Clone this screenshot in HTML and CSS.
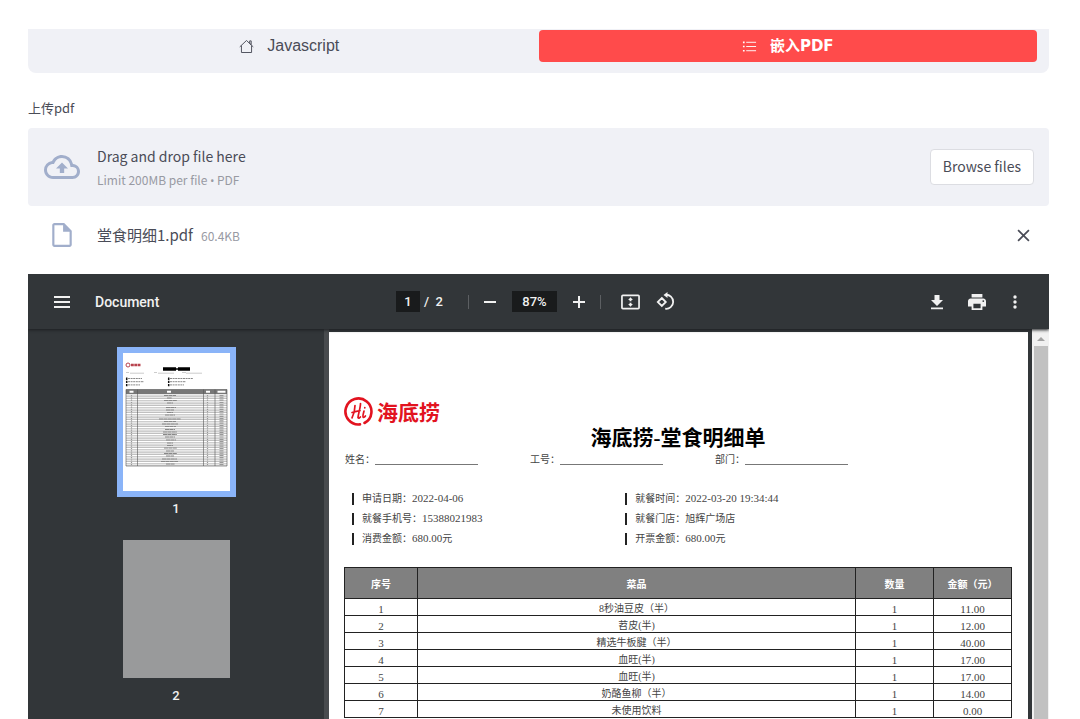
FILE: index.html
```html
<!DOCTYPE html>
<html lang="zh-CN">
<head>
<meta charset="utf-8">
<meta name="viewport" content="width=device-width, initial-scale=1">
<title>嵌入PDF</title>
<link rel="stylesheet" href="styles.css">
</head>
<body>
<main class="app">
  <nav class="tabs">
    <a class="tab" href="#javascript">
      <svg class="tab-icon" viewBox="0 0 16 16" fill="none" stroke="currentColor"><path d="M.8 8.4 8 1.6l7.2 6.8M2.6 7v7.4h10.8V7M11.4 2v2.6l1.6 1.5V2z"/></svg>
      <span>Javascript</span>
    </a>
    <a class="tab tab-active" href="#pdf">
      <svg class="tab-icon" viewBox="0 0 16 16" fill="none" stroke="currentColor"><path d="M4.5 3.5H15M4.5 8H15M4.5 12.500H15"/><path stroke-width="1.800" d="M1 3.500h1.800M1 8h1.800M1 12.500h1.800"/></svg>
      <span>嵌入PDF</span>
    </a>
  </nav>

  <section class="uploader">
    <h2 class="uploader-label">上传pdf</h2>
    <div class="dropzone">
      <svg class="cloud" viewBox="0 0 24 24" fill="currentColor"><path d="M19.35 10.04A7.49 7.49 0 0 0 12 4C9.110 4 6.600 5.640 5.350 8.040A5.994 5.994 0 0 0 0 14c0 3.310 2.690 6 6 6h13c2.760 0 5-2.240 5-5 0-2.640-2.050-4.780-4.650-4.960zM19 18H6c-2.210 0-4-1.790-4-4 0-2.050 1.530-3.760 3.560-3.970l1.070-.11.5-.95A5.469 5.469 0 0 1 12 6c2.620 0 4.880 1.860 5.390 4.430l.3 1.500 1.530.11A2.980 2.980 0 0 1 22 15c0 1.650-1.350 3-3 3zM8 13h2.550v3h2.900v-3H16l-4-4z"/></svg>
      <div class="dropzone-text">
        <span class="dropzone-title">Drag and drop file here</span>
        <span class="dropzone-hint">Limit 200MB per file <span class="bullet">•</span> PDF</span>
      </div>
      <button class="browse" type="button">Browse files</button>
    </div>
    <div class="file">
      <svg class="file-icon" viewBox="0 0 24 24" fill="currentColor"><path fill-rule="evenodd" d="M5 1c-1.100 0-2 .9-2 2v18c0 1.100.9 2 2 2h14c1.100 0 2-.9 2-2V8l-7-7zM5 3h8v6h6v12H5z"/></svg>
      <span class="file-name">堂食明细1.pdf</span>
      <span class="file-size">60.4KB</span>
      <button class="remove" type="button" aria-label="Remove file"><svg viewBox="0 0 12 12" fill="none" stroke="currentColor" stroke-width="1.600"><path d="m1 1 10 10M11 1 1 11"/></svg></button>
    </div>
  </section>

  <section class="viewer">
    <header class="toolbar">
      <div class="tools-left">
        <button class="tool" type="button" aria-label="Menu"><svg class="menu-icon" viewBox="0 0 16 14" fill="currentColor"><path d="M0 1h16v2H0zM0 6h16v2H0zM0 11h16v2H0z"/></svg></button>
        <span class="document-name">Document</span>
      </div>
      <div class="tools-center">
        <input class="page-input" type="text" value="1" aria-label="Page number">
        <span class="page-total">/&nbsp; 2</span>
        <span class="divider divider-first"></span>
        <button class="tool" type="button" aria-label="Zoom out"><svg class="step-icon" viewBox="0 0 12 12" fill="currentColor"><path d="M0 5h12v2H0z"/></svg></button>
        <input class="zoom-input" type="text" value="87%" aria-label="Zoom level">
        <button class="tool" type="button" aria-label="Zoom in"><svg class="step-icon" viewBox="0 0 12 12" fill="currentColor"><path d="M0 5h12v2H0zM5 0h2v12H5z"/></svg></button>
        <span class="divider divider-last"></span>
        <button class="tool" type="button" aria-label="Fit to page"><svg class="fit-icon" viewBox="0 0 20 16" fill="currentColor"><rect x="1" y="1" width="18" height="14" rx="1" fill="none" stroke="currentColor" stroke-width="1.800"/><path d="m10 3 2.500 3H11v1.200H9V6H7.500zM10 13l-2.500-3H9V8.800h2V10h1.500z"/></svg></button>
        <button class="tool" type="button" aria-label="Rotate"><svg class="rotate-icon" viewBox="0 0 19 19" fill="none" stroke="currentColor" stroke-width="1.800"><path d="m5.800 6 4 4-4 4-4-4zM9.500 2.800A7 7 0 1 1 9.200 16.700"/><path fill="currentColor" stroke="none" d="M11.500 0v6L7.500 3z"/></svg></button>
      </div>
      <div class="tools-right">
        <button class="tool" type="button" aria-label="Download"><svg class="download-icon" viewBox="0 0 14 16" fill="currentColor"><path d="M4.500 1h5v5H13l-6 6-6-6h3.500zM1 13.500h12v1.800H1z"/></svg></button>
        <button class="tool" type="button" aria-label="Print"><svg class="print-icon" viewBox="2 2 20 20" fill="currentColor"><path fill-rule="evenodd" d="M19 8H5c-1.660 0-3 1.340-3 3v6h4v4h12v-4h4v-6c0-1.660-1.340-3-3-3zm-3 11H8v-5h8zm3-7a1 1 0 1 1 0-2 1 1 0 0 1 0 2zM18 3H6v4h12z"/></svg></button>
        <button class="tool" type="button" aria-label="More"><svg class="more-icon" viewBox="0 0 4 14" fill="currentColor"><circle cx="2" cy="2" r="1.700"/><circle cx="2" cy="7" r="1.700"/><circle cx="2" cy="12" r="1.700"/></svg></button>
      </div>
    </header>

    <div class="viewer-body">
      <aside class="thumbs">
        <div class="thumb thumb-active">
          <svg class="thumb-page" viewBox="0 0 107 138">
            <defs><pattern id="rows" width="101" height="7" patternUnits="userSpaceOnUse" y="41"><path fill="#e8e8e8" d="M0 0h101v7H0z"/><path fill="#fff" d="M0 5h101v1H0z"/><path stroke="#999" stroke-width=".5" d="M0 2.200h101M0 4.500h101M0 6.800h101"/></pattern></defs>
            <path fill="#fff" d="M0 0h107v138H0z"/>
            <circle cx="5" cy="12" r="2" fill="none" stroke="#b8434e"/>
            <path stroke="#b8434e" stroke-width="2.500" stroke-dasharray="2.800 .5" d="M8 12h10"/>
            <path stroke="#000" stroke-width="3.500" d="M40 16h13M55 16h12"/>
            <path stroke="#000" stroke-width="1.500" d="M52 16h4"/>
            <path stroke="#aaa" stroke-width=".6" d="M3 19.500h3M7 20.200h14M31 19.500h3M35 20.200h16M59 19.500h4M63 20.200h16"/>
            <path stroke="#111" stroke-width="1.500" stroke-dasharray="2.400 .8" d="M3.700 24.500v9M45.700 24.500v9"/>
            <path stroke="#888" stroke-dasharray="2 .6" d="M5 25.500h14M5 28.700h16M5 31.900h12M47 25.500h23M47 28.700h16M47 31.900h14"/>
            <path fill="url(#rows)" d="M3 41h101v72H3z"/>
            <path stroke="#999" stroke-width="1.200" stroke-dasharray="1.200 1.100" d="M8.500 42v70M84.500 42v70"/>
            <path stroke="#888" stroke-dasharray="4 .4" d="M41 42.500h12M44 45h5M41 47.500h13M44 50h6M43 54.500h10M43 57h8M44 59.500h6M42 62h10M36 66h22M41 68.500h12M39 71h16M42 73.500h11M42 76.500h10M40 79h14M40 81.500h14M42 84h10M43 87h10M44 90h6M44 92.500h6M41 95h13M43 98h8M41 100.500h13M43 103h8M39 106h15M38 108.500h17M43 111h9"/>
            <path stroke="#999" stroke-width="4" stroke-dasharray="1.200 1.100" d="M98.500 42v70"/>
            <path fill="#777" d="M3 36.500h101v4.500H3z"/>
            <path fill="none" stroke="#555" stroke-width=".6" d="M3 36.500h101V113H3zM14.500 36.500V113M80.500 36.500V113M92 36.500V113"/>
            <path stroke="#fff" stroke-width="2" d="M6.500 38.700h4M44 38.700h4M83 38.700h4M94.500 38.700h8"/>
          </svg>
        </div>
        <span class="thumb-number">1</span>
        <div class="thumb"><div class="thumb-page thumb-blank"></div></div>
        <span class="thumb-number">2</span>
      </aside>

      <article class="page">
        <div class="brand">
          <svg class="brand-mark" viewBox="0 0 29 29" fill="none" stroke="currentColor" stroke-linecap="round"><path stroke-width="2.600" d="M16 27.400A13 13 0 1 1 20.500 26"/><path stroke-width="1.700" d="M11 8.500c0 4-1.300 9-3 12.300M16.500 6.500c0 4-2 9.500-2.500 14 .6 1.200 1.600.5 2.400-.5M8 15.500c2.500-.7 5-1.400 8-1.800M20 14c-.6 2.500-1.600 5.300-.8 6.300.7.500 1.600-.4 2.200-1.300M20.800 10.500v.3"/></svg>
          <span>海底捞</span>
        </div>
        <h1 class="title">海底捞-堂食明细单</h1>
        <div class="blanks">
          <div class="blank">姓名：<span class="blank-line"></span></div>
          <div class="blank">工号：<span class="blank-line"></span></div>
          <div class="blank">部门：<span class="blank-line"></span></div>
        </div>
        <div class="facts">
          <div class="fact">申请日期：<span class="number">2022-04-06</span></div>
          <div class="fact">就餐时间：<span class="number">2022-03-20 19:34:44</span></div>
          <div class="fact">就餐手机号：<span class="number">15388021983</span></div>
          <div class="fact">就餐门店：旭辉广场店</div>
          <div class="fact">消费金额：<span class="number">680.00</span>元</div>
          <div class="fact">开票金额：<span class="number">680.00</span>元</div>
        </div>
        <table class="dishes">
          <thead><tr><th class="col-index">序号</th><th>菜品</th><th class="col-number">数量</th><th class="col-number">金额（元）</th></tr></thead>
          <tbody>
            <tr><td class="number">1</td><td>8秒油豆皮（半）</td><td class="number">1</td><td class="number">11.00</td></tr>
            <tr><td class="number">2</td><td>苕皮(半)</td><td class="number">1</td><td class="number">12.00</td></tr>
            <tr><td class="number">3</td><td>精选牛板腱（半）</td><td class="number">1</td><td class="number">40.00</td></tr>
            <tr><td class="number">4</td><td>血旺(半)</td><td class="number">1</td><td class="number">17.00</td></tr>
            <tr><td class="number">5</td><td>血旺(半)</td><td class="number">1</td><td class="number">17.00</td></tr>
            <tr><td class="number">6</td><td>奶酪鱼柳（半）</td><td class="number">1</td><td class="number">14.00</td></tr>
            <tr><td class="number">7</td><td>未使用饮料</td><td class="number">1</td><td class="number">0.00</td></tr>
          </tbody>
        </table>
      </article>

      <div class="scrollbar"><svg class="scroll-arrow" viewBox="0 0 8 4" fill="#a3a3a3"><path d="M4 0l4 4H0z"/></svg><div class="scroll-thumb"></div></div>
    </div>
  </section>
</main>
</body>
</html>
```
FILE: styles.css
```css
* {
  box-sizing: border-box;
}

body {
  margin: 0;
  background: #fff;
  color: #4a4c57;
  font-family: "Noto Sans CJK SC", sans-serif;
  font-size: 16px;
}

svg {
  display: block;
}

button,
input {
  font: inherit;
  color: inherit;
}

.app {
  display: flex;
  flex-direction: column;
  height: 100vh;
  padding: 29px 31px 0 28px;
}

/* Tabs */
.tabs {
  display: flex;
  padding: 1px 12px 11px;
  background: #f0f1f6;
  border-radius: 0 0 8px 8px;
}

.tab {
  display: flex;
  flex: 1;
  align-items: center;
  justify-content: center;
  gap: 13px;
  height: 32px;
  border-radius: 4px;
  color: #4a4c57;
  font-family: "Liberation Sans", "Noto Sans CJK SC", sans-serif;
  line-height: 24px;
  text-decoration: none;
}

.tab-active {
  background: #ff4b4b;
  color: #fff;
  font-family: "DejaVu Sans", "Noto Sans CJK SC", sans-serif;
  font-size: 15px;
  font-weight: 700;
}

.tab-icon {
  width: 15px;
  height: 15px;
}

/* Uploader */
.uploader-label {
  margin: 24px 0 9px;
  font-size: 13px;
  font-weight: 400;
  line-height: 22px;
}

.dropzone {
  display: flex;
  align-items: center;
  gap: 17px;
  padding: 16px 15px 16px 16px;
  background: #f0f1f6;
  border-radius: 4px;
}

.cloud {
  width: 36px;
  height: 36px;
  color: #a1aecb;
}

.dropzone-text {
  display: flex;
  flex: 1;
  flex-direction: column;
}

.dropzone-title {
  font-size: 14px;
  line-height: 24px;
}

.dropzone-hint {
  height: 22px;
  color: #989aa3;
  font-size: 12px;
  line-height: 24px;
}

.bullet {
  font-family: Roboto, sans-serif;
  line-height: 1;
}

.browse {
  height: 36px;
  padding: 0 12px 2px;
  border: 1px solid #dcdde2;
  border-radius: 4px;
  background: #fff;
  font-size: 14px;
  line-height: 20px;
}

.file {
  display: flex;
  align-items: center;
  padding: 16px 19px 26px 21px;
}

.file-icon {
  width: 26px;
  height: 26px;
  margin-right: 22px;
  color: #a1aecb;
}

.file-name {
  margin-right: 8px;
  font-size: 15px;
  line-height: 24px;
}

.file-size {
  flex: 1;
  color: #989aa3;
  font-size: 12px;
}

.remove {
  padding: 0;
  border: 0;
  background: none;
}

.remove svg {
  width: 13px;
  height: 13px;
}

/* PDF viewer */
.viewer {
  display: flex;
  flex: 1;
  flex-direction: column;
  min-height: 0;
  overflow: hidden;
  background: #323639;
}

.toolbar {
  display: grid;
  grid-template-columns: 1fr auto 1fr;
  align-items: center;
  flex: none;
  height: 55px;
  padding: 0 32px 0 26px;
  box-shadow: 0 1px 3px #1c1e20;
  color: #f1f1f1;
  font-family: Roboto, sans-serif;
  font-size: 13px;
  font-weight: 500;
  z-index: 1;
}

.document-name {
  font-size: 14px;
}

.tool {
  padding: 0;
  border: 0;
  background: none;
}

.tools-left,
.tools-center,
.tools-right {
  display: flex;
  align-items: center;
}

.tools-left {
  gap: 25px;
}

.tools-right {
  justify-content: flex-end;
  gap: 24px;
}

.page-input,
.zoom-input {
  height: 21px;
  padding: 0;
  border: 0;
  background: #191b1c;
  text-align: center;
}

.page-input {
  width: 24px;
  margin-right: 4px;
}

.zoom-input {
  width: 45px;
  margin: 0 16px;
}

.divider {
  width: 1px;
  height: 14px;
  background: #5c5f62;
}

.divider-first {
  margin: 0 15px 0 25px;
}

.divider-last {
  margin: 0 20px 0 15px;
}

.menu-icon {
  width: 16px;
  height: 14px;
}

.step-icon {
  width: 12px;
  height: 12px;
}

.fit-icon {
  width: 19px;
  height: 16px;
}

.rotate-icon {
  width: 19px;
  height: 19px;
  margin-left: 16px;
}

.download-icon {
  width: 14px;
  height: 16px;
}

.print-icon {
  width: 18px;
  height: 18px;
}

.more-icon {
  width: 4px;
  height: 14px;
  margin-left: 3px;
}

.viewer-body {
  display: flex;
  flex: 1;
  min-height: 0;
}

.thumbs {
  display: flex;
  flex: none;
  flex-direction: column;
  align-items: center;
  width: 301px;
  padding-top: 18px;
  border-right: 5px solid #484b4e;
}

.thumb {
  padding: 6px;
}

.thumb-active {
  background: #8ab4f8;
}

.thumb-page {
  width: 107px;
  height: 138px;
}

.thumb-blank {
  background: #999a9b;
}

.thumb-number {
  margin: 4px 0 17px;
  color: #f1f1f1;
  font-family: Roboto, sans-serif;
  font-size: 13px;
  font-weight: 500;
  line-height: 16px;
}

/* Receipt page */
.page {
  flex: 1;
  margin-top: 3px;
  padding: 64px 16px 0 15px;
  background: #fff;
  color: #444;
  font-family: "Liberation Serif", "Noto Sans CJK SC", serif;
  font-size: 10px;
  line-height: 16px;
}

.number {
  font-size: 11px;
}

.brand {
  display: flex;
  align-items: center;
  gap: 4px;
  color: #e2131f;
  font-family: "Noto Sans CJK SC", sans-serif;
  font-size: 21px;
  font-weight: 700;
  line-height: 30px;
}

.brand-mark {
  width: 29px;
  height: 29px;
}

.title {
  margin: 0;
  color: #000;
  font-size: 21px;
  font-weight: 700;
  line-height: 24px;
  text-align: center;
}

.blanks {
  display: flex;
  gap: 52px;
  padding: 2px 0 0 1px;
}

.blank {
  display: flex;
}

.blank-line {
  width: 103px;
  height: 13px;
  border-bottom: 1px solid #777;
}

.facts {
  display: grid;
  grid-template-columns: 41fr 58fr;
  row-gap: 8px;
  padding: 25px 0 22px 8px;
}

.fact {
  padding-left: 8px;
  border-left: 2px solid #222;
  line-height: 12px;
}

.fact .number {
  line-height: 1;
}

.dishes {
  width: 100%;
  border-collapse: collapse;
  table-layout: fixed;
  text-align: center;
}

.dishes th,
.dishes td {
  padding: 0;
  border: 1px solid #222;
}

.dishes th {
  height: 31px;
  padding-top: 4px;
  background: #808080;
  color: #fff;
}

.dishes td {
  height: 17px;
  padding-top: 3px;
  line-height: 12px;
}

.col-index {
  width: 73px;
}

.col-number {
  width: 78px;
}

/* Scrollbar */
.scrollbar {
  display: flex;
  flex: none;
  flex-direction: column;
  align-items: center;
  width: 17px;
  margin-left: 4px;
  padding-top: 8px;
  background: #f1f1f1;
}

.scroll-arrow {
  width: 8px;
  height: 4px;
  margin-bottom: 5px;
}

.scroll-thumb {
  flex: 1;
  width: 14px;
  background: #c1c1c1;
}
```
